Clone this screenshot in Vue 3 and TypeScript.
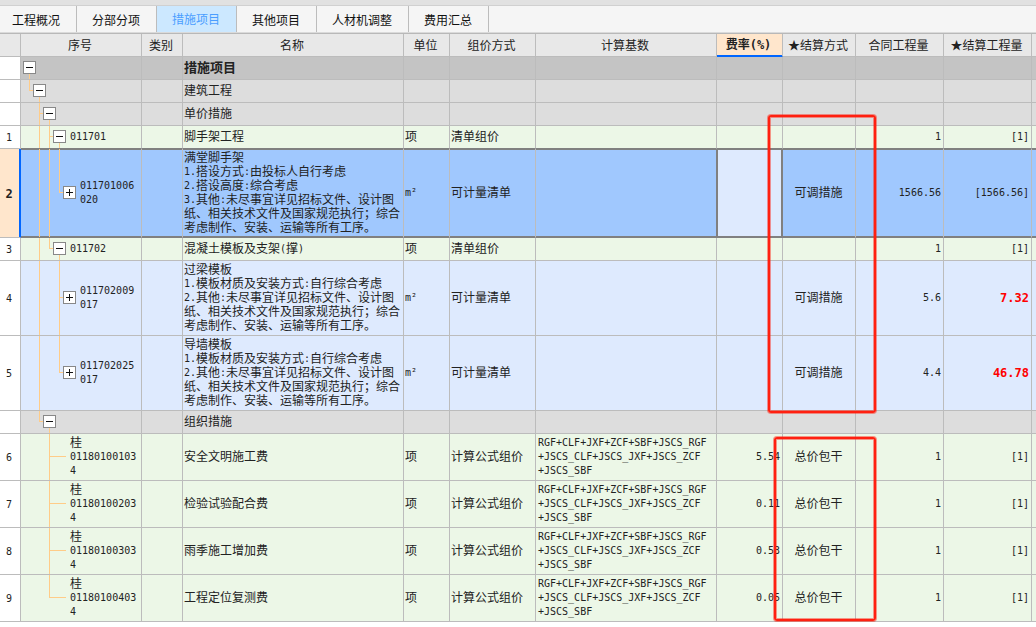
<script setup lang="ts">
import { ref } from 'vue'

type Tone = 'root' | 'group' | 'list' | 'item'
type Guide = 'none' | 'line' | 'tee' | 'end'

interface Row {
  no: string
  tone: Tone
  guides: Guide[]
  node: 'open' | 'closed' | 'leaf'
  code: string
  name: string
  unit: string
  pricing: string
  basis: string
  rate: string
  method: string
  contract: string
  settled: string
  changed?: boolean
}

interface Piece {
  text: string
  narrow: boolean
}

const tabs: string[] = ['工程概况', '分部分项', '措施项目', '其他项目', '人材机调整', '费用汇总']
const activeTab = ref<string>('措施项目')
const activeRow = ref<string>('2')

const columns: { key: string; title: string }[] = [
  { key: 'code', title: '序号' },
  { key: 'kind', title: '类别' },
  { key: 'name', title: '名称' },
  { key: 'unit', title: '单位' },
  { key: 'pricing', title: '组价方式' },
  { key: 'basis', title: '计算基数' },
  { key: 'rate', title: '费率(%)' },
  { key: 'method', title: '★结算方式' },
  { key: 'contract', title: '合同工程量' },
  { key: 'settled', title: '★结算工程量' },
]

const formula = 'RGF+CLF+JXF+ZCF+SBF+JSCS_RGF\n+JSCS_CLF+JSCS_JXF+JSCS_ZCF\n+JSCS_SBF'

const blank = { no: '', code: '', unit: '', pricing: '', basis: '', rate: '', method: '', contract: '', settled: '' }

function group(name: string, guides: Guide[], tone: Tone = 'group'): Row {
  return { ...blank, tone, guides, node: 'open', name }
}

function list(no: string, code: string, name: string, guides: Guide[]): Row {
  return { ...blank, no, tone: 'list', guides, node: 'open', code, name, unit: '项', pricing: '清单组价', contract: '1', settled: '[1]' }
}

function item(no: string, code: string, name: string, guides: Guide[], contract: string, settled: string, changed = false): Row {
  return { ...blank, no, tone: 'item', guides, node: 'closed', code, name, unit: 'm²', pricing: '可计量清单', method: '可调措施', contract, settled, changed }
}

function fee(no: string, code: string, name: string, last: Guide, rate: string): Row {
  return {
    no, tone: 'list', guides: ['none', 'none', last], node: 'leaf', code, name, unit: '项',
    pricing: '计算公式组价', basis: formula, rate, method: '总价包干', contract: '1', settled: '[1]',
  }
}

const formwork = '1.模板材质及安装方式:自行综合考虑\n2.其他:未尽事宜详见招标文件、设计图纸、相关技术文件及国家规范执行；综合考虑制作、安装、运输等所有工序。'

const rows: Row[] = [
  group('措施项目', [], 'root'),
  group('建筑工程', ['end']),
  group('单价措施', ['none', 'tee']),
  list('1', '011701', '脚手架工程', ['none', 'line', 'tee']),
  item('2', '011701006\n020', '满堂脚手架\n1.搭设方式:由投标人自行考虑\n2.搭设高度:综合考虑\n3.其他:未尽事宜详见招标文件、设计图纸、相关技术文件及国家规范执行；综合考虑制作、安装、运输等所有工序。', ['none', 'line', 'line', 'end'], '1566.56', '[1566.56]'),
  list('3', '011702', '混凝土模板及支架(撑)', ['none', 'line', 'end']),
  item('4', '011702009\n017', '过梁模板\n' + formwork, ['none', 'line', 'none', 'tee'], '5.6', '7.32', true),
  item('5', '011702025\n017', '导墙模板\n' + formwork, ['none', 'line', 'none', 'end'], '4.4', '46.78', true),
  group('组织措施', ['none', 'end']),
  fee('6', '桂\n01180100103\n4', '安全文明施工费', 'tee', '5.54'),
  fee('7', '桂\n01180100203\n4', '检验试验配合费', 'tee', '0.11'),
  fee('8', '桂\n01180100303\n4', '雨季施工增加费', 'tee', '0.53'),
  fee('9', '桂\n01180100403\n4', '工程定位复测费', 'end', '0.05'),
]

// Half-width runs are set in a monospaced face at half the ideograph width.
function pieces(text: string): Piece[] {
  return text
    .split(/([\x20-\x7e²]+)/)
    .filter((t) => t !== '')
    .map((t) => ({ text: t, narrow: /^[\x20-\x7e²]+$/.test(t) }))
}
</script>

<template>
  <main class="app" lang="zh-CN">
    <nav class="tabs">
      <button
        v-for="t in tabs"
        :key="t"
        type="button"
        class="tab"
        :class="{ active: t === activeTab }"
        @click="activeTab = t"
      >{{ t }}</button>
    </nav>

    <table class="grid">
      <colgroup>
        <col class="w-no" />
        <col v-for="c in columns" :key="c.key" :class="'w-' + c.key" />
        <col />
      </colgroup>
      <thead>
        <tr>
          <th></th>
          <th v-for="c in columns" :key="c.key" scope="col" :class="{ current: c.key === 'rate' }">
            <span v-for="(p, i) in pieces(c.title)" :key="i" :class="{ narrow: p.narrow }">{{ p.text }}</span>
          </th>
          <th class="rest"></th>
        </tr>
      </thead>
      <tbody>
        <tr
          v-for="(r, n) in rows"
          :key="n"
          :class="[r.tone, { selected: r.no !== '' && r.no === activeRow, above: rows[n + 1]?.no === activeRow }]"
        >
          <th scope="row" class="no"><span class="narrow">{{ r.no }}</span></th>
          <td class="tree-cell">
            <div class="tree">
              <span v-for="(g, i) in r.guides" :key="i" class="guide" :class="g"></span>
              <span v-if="r.node === 'leaf'" class="stub"></span>
              <span v-else class="node" :class="r.node">
                <button type="button" class="toggle" :aria-label="r.node === 'open' ? '折叠' : '展开'">
                  <svg viewBox="0 0 11 11" width="11" height="11" shape-rendering="crispEdges">
                    <rect x="2" y="5" width="7" height="1" fill="#111" />
                    <rect v-if="r.node === 'closed'" x="5" y="2" width="1" height="7" fill="#111" />
                  </svg>
                </button>
              </span>
              <span class="code"><span v-for="(p, i) in pieces(r.code)" :key="i" :class="{ narrow: p.narrow }">{{ p.text }}</span></span>
            </div>
          </td>
          <td></td>
          <td class="text"><span v-for="(p, i) in pieces(r.name)" :key="i" :class="{ narrow: p.narrow }">{{ p.text }}</span></td>
          <td class="text"><span v-for="(p, i) in pieces(r.unit)" :key="i" :class="{ narrow: p.narrow }">{{ p.text }}</span></td>
          <td class="text">{{ r.pricing }}</td>
          <td class="text basis"><span v-for="(p, i) in pieces(r.basis)" :key="i" :class="{ narrow: p.narrow }">{{ p.text }}</span></td>
          <td class="num rate"><span class="narrow">{{ r.rate }}</span></td>
          <td class="mid">{{ r.method }}</td>
          <td class="num"><span class="narrow">{{ r.contract }}</span></td>
          <td class="num" :class="{ changed: r.changed }"><span class="narrow">{{ r.settled }}</span></td>
          <td class="rest"></td>
        </tr>
      </tbody>
    </table>

    <div class="mark adjustable"></div>
    <div class="mark lump"></div>
  </main>
</template>

<style>
body {
  margin: 0;
  background: #fff;
}
</style>

<style scoped>
.app {
  display: flow-root;
  position: relative;
  font-family: "Noto Sans CJK SC", "Liberation Sans", sans-serif;
  font-size: 12px;
  line-height: 14px;
  color: #222;
}

.tabs {
  display: flex;
  height: 26px;
  margin-top: 5px;
  border-top: 1px solid #d0d0d0;
  border-bottom: 1px solid #dadada;
  background: #f5f5f5;
  box-shadow: 0 -5px 0 #e1e1e1;
}

.tab {
  border: 0;
  border-right: 1px solid #bcbcbc;
  padding: 2px 16px 0 15px;
  background: #f5f5f5;
  color: #111;
  font: inherit;
  cursor: pointer;
}

.tab:first-child {
  padding-left: 12px;
}

.tab.active {
  padding-top: 0;
  background: #cce8ff;
  color: #4a9eff;
}

.grid {
  width: 100%;
  table-layout: fixed;
  border-collapse: separate;
  border-spacing: 0;
  border-top: 1px solid #b8b8b8;
}

.w-no { width: 21px; }
.w-code { width: 121px; }
.w-kind { width: 41px; }
.w-name { width: 221px; }
.w-unit { width: 46px; }
.w-pricing { width: 86px; }
.w-basis { width: 181px; }
.w-rate { width: 66px; }
.w-method { width: 73px; }
.w-contract { width: 88px; }
.w-settled { width: 88px; }

th,
td {
  box-sizing: border-box;
  height: 23px;
  padding: 0 1px 2px;
  border-right: 1px solid #bcbcbc;
  border-bottom: 1px solid #bcbcbc;
  font-weight: normal;
  vertical-align: middle;
}

.rest {
  border-right: 0;
}

thead th {
  padding: 0 2px 0 0;
  background: #e8e8e8;
  text-align: center;
  white-space: nowrap;
}

.narrow {
  font-family: "DejaVu Sans Mono", "Liberation Mono", monospace;
  font-size: 10px;
  line-height: 0;
  vertical-align: 1px;
}

thead th.current {
  padding-bottom: 2px;
  background: #ffe6cc;
  border-bottom-color: #06f;
  box-shadow: inset 0 -1px 0 #06f;
  font-weight: bold;
}

.current .narrow,
.changed .narrow,
.selected .no .narrow {
  font-size: 12px;
  vertical-align: baseline;
}

.root td { background: #c4c4c4; }
.group td { background: #ddd; }
.list td { background: #ecf7e7; }
.item td { background: #deeafe; }

.root td.text {
  font-weight: bold;
  font-size: 13px;
}

.no {
  padding: 0 2px 0 0;
  background: #fff;
  text-align: center;
}

.text {
  white-space: pre-line;
}

.item .text,
.list .text {
  padding-top: 1px;
  padding-bottom: 3px;
}

.text.basis {
  padding-left: 2px;
}

.num {
  padding-right: 2px;
  text-align: right;
}

.mid {
  padding-left: 0;
  text-align: center;
}

.changed {
  color: #f00;
  font-weight: bold;
}

tr.above td {
  border-bottom-color: #808080;
}

tr.selected td {
  background: #a0c8fe;
  border-bottom-color: #808080;
  box-shadow: inset 0 1px 0 #808080, inset 0 -1px 0 #808080;
}

tr.selected .no {
  background: #ffe6cc;
  border-right-color: #06f;
  box-shadow: inset -1px 0 0 #06f;
  font-weight: bold;
}

tr.selected .basis {
  border-right-color: #808080;
}

tr.selected td.rate {
  background: #deeafe;
  border-right-color: #808080;
  box-shadow: inset 0 0 0 1px #808080;
}

.tree-cell {
  padding: 0 0 0 2px;
}

.tree {
  display: flex;
  height: 100%;
}

.guide {
  flex: 0 0 10px;
  background-repeat: no-repeat;
}

.guide.line {
  background-image: linear-gradient(#fc8, #fc8);
  background-position: 6px 0;
  background-size: 1px 100%;
}

.guide.tee,
.guide.end {
  background-image: linear-gradient(#fc8, #fc8), linear-gradient(#fc8 50%, transparent 50%);
  background-position: 6px 0, 6px 50%;
  background-size: 1px 100%, 4px 2px;
}

.guide.end {
  background-size: 1px 50%, 4px 2px;
}

.stub {
  flex: 0 0 13px;
  background: linear-gradient(#fc8 50%, transparent 50%) no-repeat 0 50% / 13px 2px;
}

.node {
  flex: 0 0 13px;
  display: grid;
  grid-template-rows: calc(50% - 7px) 13px 1fr;
}

.toggle {
  grid-row: 2;
  box-sizing: border-box;
  width: 13px;
  height: 13px;
  padding: 0;
  border: 1px solid #888;
  background: #fff;
  cursor: pointer;
}

.toggle svg {
  display: block;
}

.node.open::after {
  content: "";
  grid-row: 3;
  width: 1px;
  margin-left: 6px;
  background: #fc8;
}

.code {
  align-self: center;
  padding: 0 0 2px 4px;
  white-space: pre;
}

/* Red frames drawn over the settlement-method column */
.mark {
  position: absolute;
  box-sizing: border-box;
  border: 2px solid #ff2010;
  border-radius: 3px;
  box-shadow: 0 0 0 1px rgba(255, 32, 16, 0.45), inset 0 0 0 1px rgba(255, 32, 16, 0.45);
  pointer-events: none;
}

.adjustable {
  left: 768px;
  top: 115px;
  width: 108px;
  height: 298px;
}

.lump {
  left: 774px;
  top: 437px;
  width: 102px;
  height: 184px;
}
</style>
